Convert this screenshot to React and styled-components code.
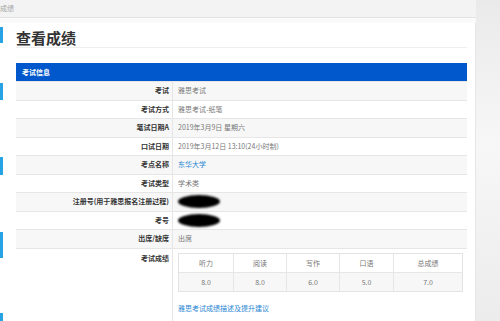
import React from 'react'
import styled, { createGlobalStyle } from 'styled-components'

const GlobalStyle = createGlobalStyle`
  html, body { margin: 0; padding: 0; }
  body {
    font-family: "Noto Sans CJK SC", "Liberation Sans", sans-serif;
    background: #fff;
  }
`

const Page = styled.div`
  width: 500px;
  height: 321px;
  overflow: hidden;
  display: flex;
  background: linear-gradient(to bottom, #eaeaea, #f7f7f7 45%, #ececec);
`

const Main = styled.div`
  width: 476px;
  display: flex;
  flex-direction: column;
  background: #fafafa;
`

const Crumb = styled.div`
  height: 18px;
  box-sizing: border-box;
  border-bottom: 1px solid #e4e4e4;
  background: #f3f3f3;
  font-size: 7px;
  line-height: 17px;
  color: #a5a5a5;
  margin-bottom: 5px;
`

const Body = styled.div`
  flex: 1;
  display: flex;
`

const Rail = styled.div`
  width: 3px;
  display: flex;
  flex-direction: column;
  background: #fff;
`

const Mark = styled.div`
  width: 2.5px;
  height: ${p => p.$h}px;
  margin-top: ${p => p.$top}px;
  flex-shrink: 0;
  background: #27a2e2;
`

const Panel = styled.div`
  flex: 1;
  background: #fff;
  border-right: 1px solid #e6e6e6;
  padding: 0 8px 0 13px;
  display: flex;
  flex-direction: column;
`

const Title = styled.h1`
  margin: 0;
  padding: 6px 0 1px;
  font-size: 15px;
  line-height: 17px;
  font-weight: bold;
  color: #333;
  border-bottom: 1px solid #eeeeee;
`

const SectionHead = styled.div`
  margin-top: 15px;
  height: 18px;
  line-height: 18px;
  background: #0058cc;
  color: #fff;
  font-size: 7px;
  font-weight: bold;
  padding-left: 6px;
`

const Row = styled.div`
  display: grid;
  grid-template-columns: 157px 1fr;
  box-sizing: border-box;
  height: ${p => (p.$tall ? 'auto' : '18.55px')};
  flex: ${p => (p.$tall ? 1 : 'none')};
  border-top: 1px solid #e6e6e6;
  background: ${p => (p.$striped ? '#f7f7f7' : '#fff')};
  font-size: 7px;
`

const Label = styled.div`
  box-sizing: border-box;
  border-right: 1px solid #e6e6e6;
  text-align: right;
  padding: ${p => (p.$top ? '4px' : '0')} 3px 0 0;
  line-height: ${p => (p.$top ? '10px' : '17.55px')};
  font-weight: bold;
  color: #333;
  white-space: nowrap;
`

const Value = styled.div`
  padding-left: 5px;
  line-height: 17.55px;
  color: ${p => (p.$link ? '#2a87d3' : '#777')};
  display: flex;
  flex-direction: column;
  align-items: flex-start;
`

const Masked = styled.div`
  width: 42px;
  height: 13px;
  margin-top: 2px;
  border-radius: 50%;
  background: #000;
  filter: blur(1px);
`

const ScoreTable = styled.div`
  margin-top: 4px;
  width: 285px;
  display: grid;
  grid-template-columns: 54px 53px 53px 54px 1fr;
  border: 1px solid #e3e3e3;
  box-sizing: border-box;
`

const ScoreCell = styled.div`
  height: 18.5px;
  line-height: 18px;
  text-align: center;
  color: #777;
  background: ${p => (p.$shade ? '#f7f7f7' : '#fff')};
  border-left: ${p => (p.$first ? 'none' : '1px solid #e6e6e6')};
  border-top: ${p => (p.$shade ? '1px solid #e6e6e6' : 'none')};
  box-sizing: border-box;
`

const ScoreLink = styled.a`
  margin-top: 11px;
  line-height: 10px;
  color: #2a87d3;
  text-decoration: none;
`

const rows = [
  ['考试', '雅思考试'],
  ['考试方式', '雅思考试-纸笔'],
  ['笔试日期A', '2019年3月9日 星期六'],
  ['口试日期', '2019年3月12日 13:10(24小时制)'],
  ['考点名称', '东华大学', 'link'],
  ['考试类型', '学术类'],
  ['注册号(用于雅思报名注册过程)', null, 'mask'],
  ['考号', null, 'mask'],
  ['出席/缺席', '出席'],
]

const heads = ['听力', '阅读', '写作', '口语', '总成绩']
const scores = ['8.0', '8.0', '6.0', '5.0', '7.0']

const marks = [
  { top: 4, h: 16 },
  { top: 40, h: 17 },
  { top: 57, h: 18 },
  { top: 57, h: 26 },
  { top: 55, h: 12 },
]

export default function App() {
  return (
    <>
      <GlobalStyle />
      <Page>
        <Main>
          <Crumb>成绩</Crumb>
          <Body>
            <Rail>
              {marks.map((m, i) => (
                <Mark key={i} $top={m.top} $h={m.h} />
              ))}
            </Rail>
            <Panel>
              <Title>查看成绩</Title>
              <SectionHead>考试信息</SectionHead>
              {rows.map(([label, value, kind], i) => (
                <Row key={label} $striped={i % 2 === 0}>
                  <Label>{label}</Label>
                  <Value $link={kind === 'link'}>
                    {kind === 'mask' ? <Masked /> : value}
                  </Value>
                </Row>
              ))}
              <Row $tall>
                <Label $top>考试成绩</Label>
                <Value>
                  <ScoreTable>
                    {heads.map((h, i) => (
                      <ScoreCell key={h} $first={i === 0}>{h}</ScoreCell>
                    ))}
                    {scores.map((s, i) => (
                      <ScoreCell key={i} $first={i === 0} $shade>{s}</ScoreCell>
                    ))}
                  </ScoreTable>
                  <ScoreLink href="#">雅思考试成绩描述及提升建议</ScoreLink>
                </Value>
              </Row>
            </Panel>
          </Body>
        </Main>
      </Page>
    </>
  )
}
